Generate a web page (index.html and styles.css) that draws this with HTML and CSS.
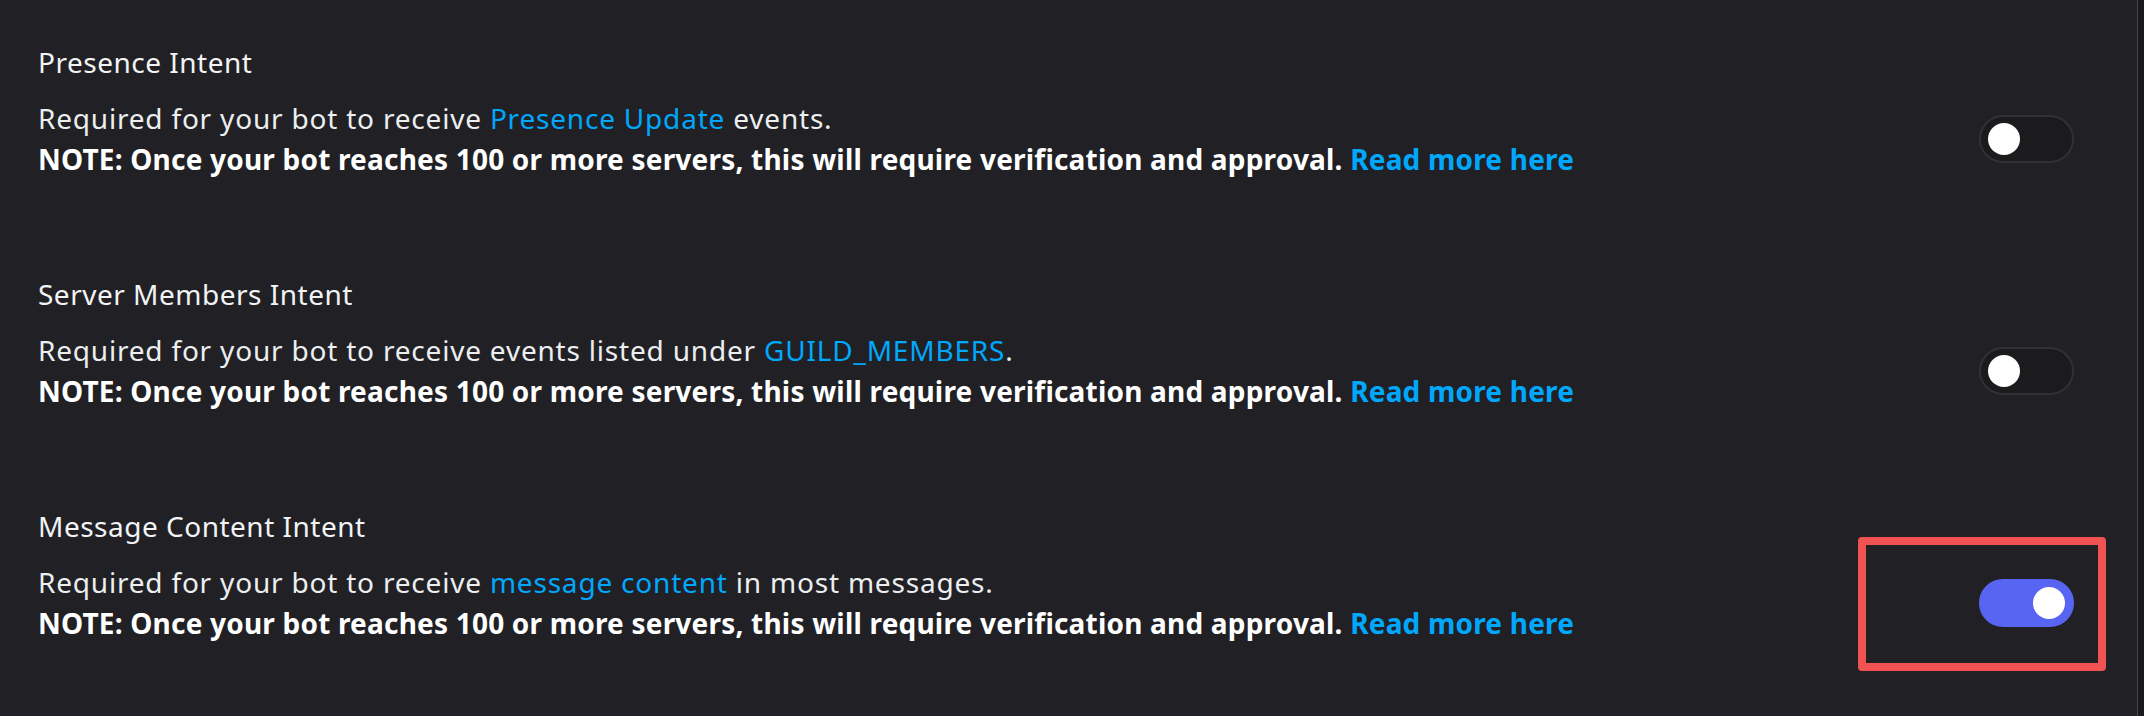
FILE: index.html
```html
<!DOCTYPE html>
<html lang="en">
<head>
<meta charset="utf-8">
<title>Privileged Gateway Intents</title>
<link rel="stylesheet" href="styles.css">
</head>
<body>
<div class="page">
  <main class="intents">
    <section class="intent">
      <div class="intent-title">Presence Intent</div>
      <div class="intent-body">
        <div class="intent-desc">
          <div class="line">Required for your bot to receive <a class="link" href="#">Presence Update</a> events.</div>
          <div class="line note">NOTE: Once your bot reaches 100 or more servers, this will require verification and approval. <a class="link" href="#">Read more here</a></div>
        </div>
        <div class="toggle-wrap">
          <span class="toggle"><span class="knob"></span></span>
        </div>
      </div>
    </section>
    <section class="intent">
      <div class="intent-title">Server Members Intent</div>
      <div class="intent-body">
        <div class="intent-desc">
          <div class="line">Required for your bot to receive events listed under <a class="link" href="#">GUILD_MEMBERS</a>.</div>
          <div class="line note">NOTE: Once your bot reaches 100 or more servers, this will require verification and approval. <a class="link" href="#">Read more here</a></div>
        </div>
        <div class="toggle-wrap">
          <span class="toggle"><span class="knob"></span></span>
        </div>
      </div>
    </section>
    <section class="intent">
      <div class="intent-title">Message Content Intent</div>
      <div class="intent-body">
        <div class="intent-desc">
          <div class="line">Required for your bot to receive <a class="link" href="#">message content</a> in most messages.</div>
          <div class="line note">NOTE: Once your bot reaches 100 or more servers, this will require verification and approval. <a class="link" href="#">Read more here</a></div>
        </div>
        <div class="toggle-wrap">
          <span class="toggle on"><span class="knob"></span></span>
          <span class="highlight"></span>
        </div>
      </div>
    </section>
  </main>
  <div class="scroll-track"></div>
</div>
</body>
</html>
```
FILE: styles.css
```css
* { box-sizing: border-box; }
html, body {
  margin: 0;
  padding: 0;
  background: #212125;
}
body {
  font-family: "Noto Sans", "Open Sans", sans-serif;
  color: #f2f3f5;
}
.page {
  display: flex;
  height: 716px;
  overflow: hidden;
}
.intents {
  flex: 1;
  display: flex;
  flex-direction: column;
  gap: 52px;
  padding: 44px 63px 0 38px;
}
.intent {
  display: flex;
  flex-direction: column;
  height: 180px;
}
.intent-title {
  font-size: 28px;
  line-height: 36px;
  letter-spacing: 0.5px;
  color: #f2f3f5;
}
.intent-body {
  margin-top: 18px;
  display: flex;
  align-items: center;
  justify-content: space-between;
}
.line {
  font-size: 28px;
  line-height: 41px;
  letter-spacing: 0.8px;
  color: #eceef0;
  white-space: nowrap;
}
.note {
  font-weight: 700;
  letter-spacing: 0.2px;
  color: #ffffff;
}
.link {
  color: #00a8fc;
  text-decoration: none;
}
.toggle-wrap {
  position: relative;
  width: 95px;
  height: 48px;
}
.toggle {
  display: flex;
  align-items: center;
  width: 95px;
  height: 48px;
  padding: 0 7px;
  border-radius: 24px;
  background: #1b1b1e;
  border: 2px solid #303035;
}
.toggle.on {
  background: #5865f2;
  border-color: #5865f2;
  justify-content: flex-end;
}
.knob {
  width: 32px;
  height: 32px;
  border-radius: 50%;
  background: #ffffff;
}
.highlight {
  position: absolute;
  left: -121px;
  top: -42px;
  width: 248px;
  height: 134px;
  border: 8px solid #f15252;
  border-radius: 4px;
}
.scroll-track {
  width: 7px;
  background: #1a1a1c;
  border-left: 1px solid #47474c;
}
```
